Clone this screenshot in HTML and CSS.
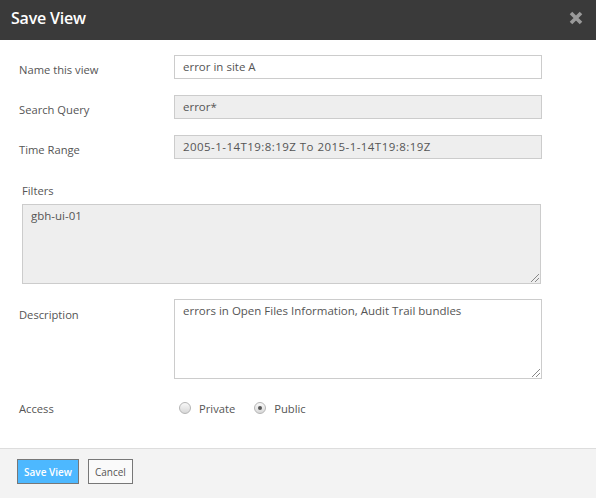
FILE: index.html
```html
<!DOCTYPE html>
<html>
<head>
<meta charset="utf-8">
<link rel="stylesheet" href="styles.css">
</head>
<body>
<div class="dialog">
  <div class="header">
    <div class="title">Save View</div>
    <svg class="close" width="14" height="14" viewBox="0 0 14 14"><path d="M2 2 L12 12 M12 2 L2 12" stroke="#9a9a9a" stroke-width="3.6" stroke-linecap="butt"/></svg>
  </div>
  <div class="body">
    <div class="row">
      <label class="label">Name this view</label>
      <div class="field">error in site A</div>
    </div>
    <div class="row">
      <label class="label">Search Query</label>
      <div class="field ro">error*</div>
    </div>
    <div class="row">
      <label class="label">Time Range</label>
      <div class="field ro"><span class="nums">2005-1-14T19:8:19Z To 2015-1-14T19:8:19Z</span></div>
    </div>
    <div class="filters">
      <label class="label">Filters</label>
      <div class="area ro wide">gbh-ui-01<span class="grip"></span></div>
    </div>
    <div class="row top">
      <label class="label lpad">Description</label>
      <div class="area">errors in Open Files Information, Audit Trail bundles<span class="grip"></span></div>
    </div>
    <div class="row access">
      <label class="label">Access</label>
      <div class="radios">
        <span class="radio"></span><span class="rtext">Private</span>
        <span class="radio on"></span><span class="rtext">Public</span>
      </div>
    </div>
  </div>
  <div class="footer">
    <button class="btn primary">Save View</button>
    <button class="btn">Cancel</button>
  </div>
</div>
</body>
</html>
```
FILE: styles.css
```css
* { box-sizing: border-box; }
html, body { margin: 0; padding: 0; background: #fff; }
body { font-family: "Open Sans", "Noto Sans", sans-serif; font-size: 11px; color: #555; }
.dialog { width: 596px; height: 498px; display: flex; flex-direction: column; }
.header { height: 40px; background: #3a3a3a; display: flex; align-items: center; justify-content: space-between; padding: 0 13px 0 11px; }
.title { color: #fff; font-size: 16px; font-weight: 600; letter-spacing: -0.2px; margin-top: -4px; }
.close { margin-top: -5px; }
.body { flex: 1; padding: 15px 54px 0 19px; display: flex; flex-direction: column; }
.row { display: flex; align-items: center; margin-bottom: 16px; }
.row.top { align-items: flex-start; margin-bottom: 0; }
.label { width: 155px; flex: none; color: #555; font-size: 11.2px; padding-top: 4px; }
.lpad { padding-top: 8px; }
.field { flex: 1; height: 24px; border: 1px solid #ccc; background: #fff; padding: 0 8px; line-height: 22px; color: #555; font-size: 11.5px; }
.nums { letter-spacing: 0.45px; }
.area { position: relative; flex: 1; height: 80px; border: 1px solid #ccc; background: #fff; padding: 3px 8px; line-height: 16px; color: #555; font-size: 11.5px; }
.ro, .area.ro { background: #eee; }
.filters { padding: 8px 0 15px 3px; display: flex; flex-direction: column; }
.filters .label { margin-bottom: 6px; padding-top: 0; }
.area.wide { flex: none; width: 519px; }
.grip { position: absolute; right: 1px; bottom: 1px; width: 8px; height: 8px; background: linear-gradient(135deg, transparent 45%, #888 45%, #888 55%, transparent 55%, transparent 70%, #888 70%, #888 80%, transparent 80%); }
.access { margin-top: 21px; }
.access .label { padding-top: 1px; }
.radios { display: flex; align-items: center; padding-left: 5px; }
.radio { width: 12px; height: 12px; border-radius: 50%; border: 1px solid #b5b5b5; background: linear-gradient(#f8f8f8, #d8d8d8); margin-right: 8px; position: relative; }
.radio.on::after { content: ""; position: absolute; left: 3px; top: 3px; width: 4px; height: 4px; border-radius: 50%; background: #555; }
.rtext { margin-right: 19px; color: #555; font-size: 11.2px; }
.footer { height: 50px; background: #f3f3f3; border-top: 1px solid #ddd; display: flex; align-items: flex-start; padding: 10px 0 0 17px; gap: 9px; }
.btn { height: 25px; font-family: inherit; font-size: 10px; padding: 0 6px; border: 1px solid #777; background: #fafafa; color: #555; cursor: pointer; }
.btn.primary { background: #4db8ff; color: #fff; font-weight: 600; border-color: #777; }
```
